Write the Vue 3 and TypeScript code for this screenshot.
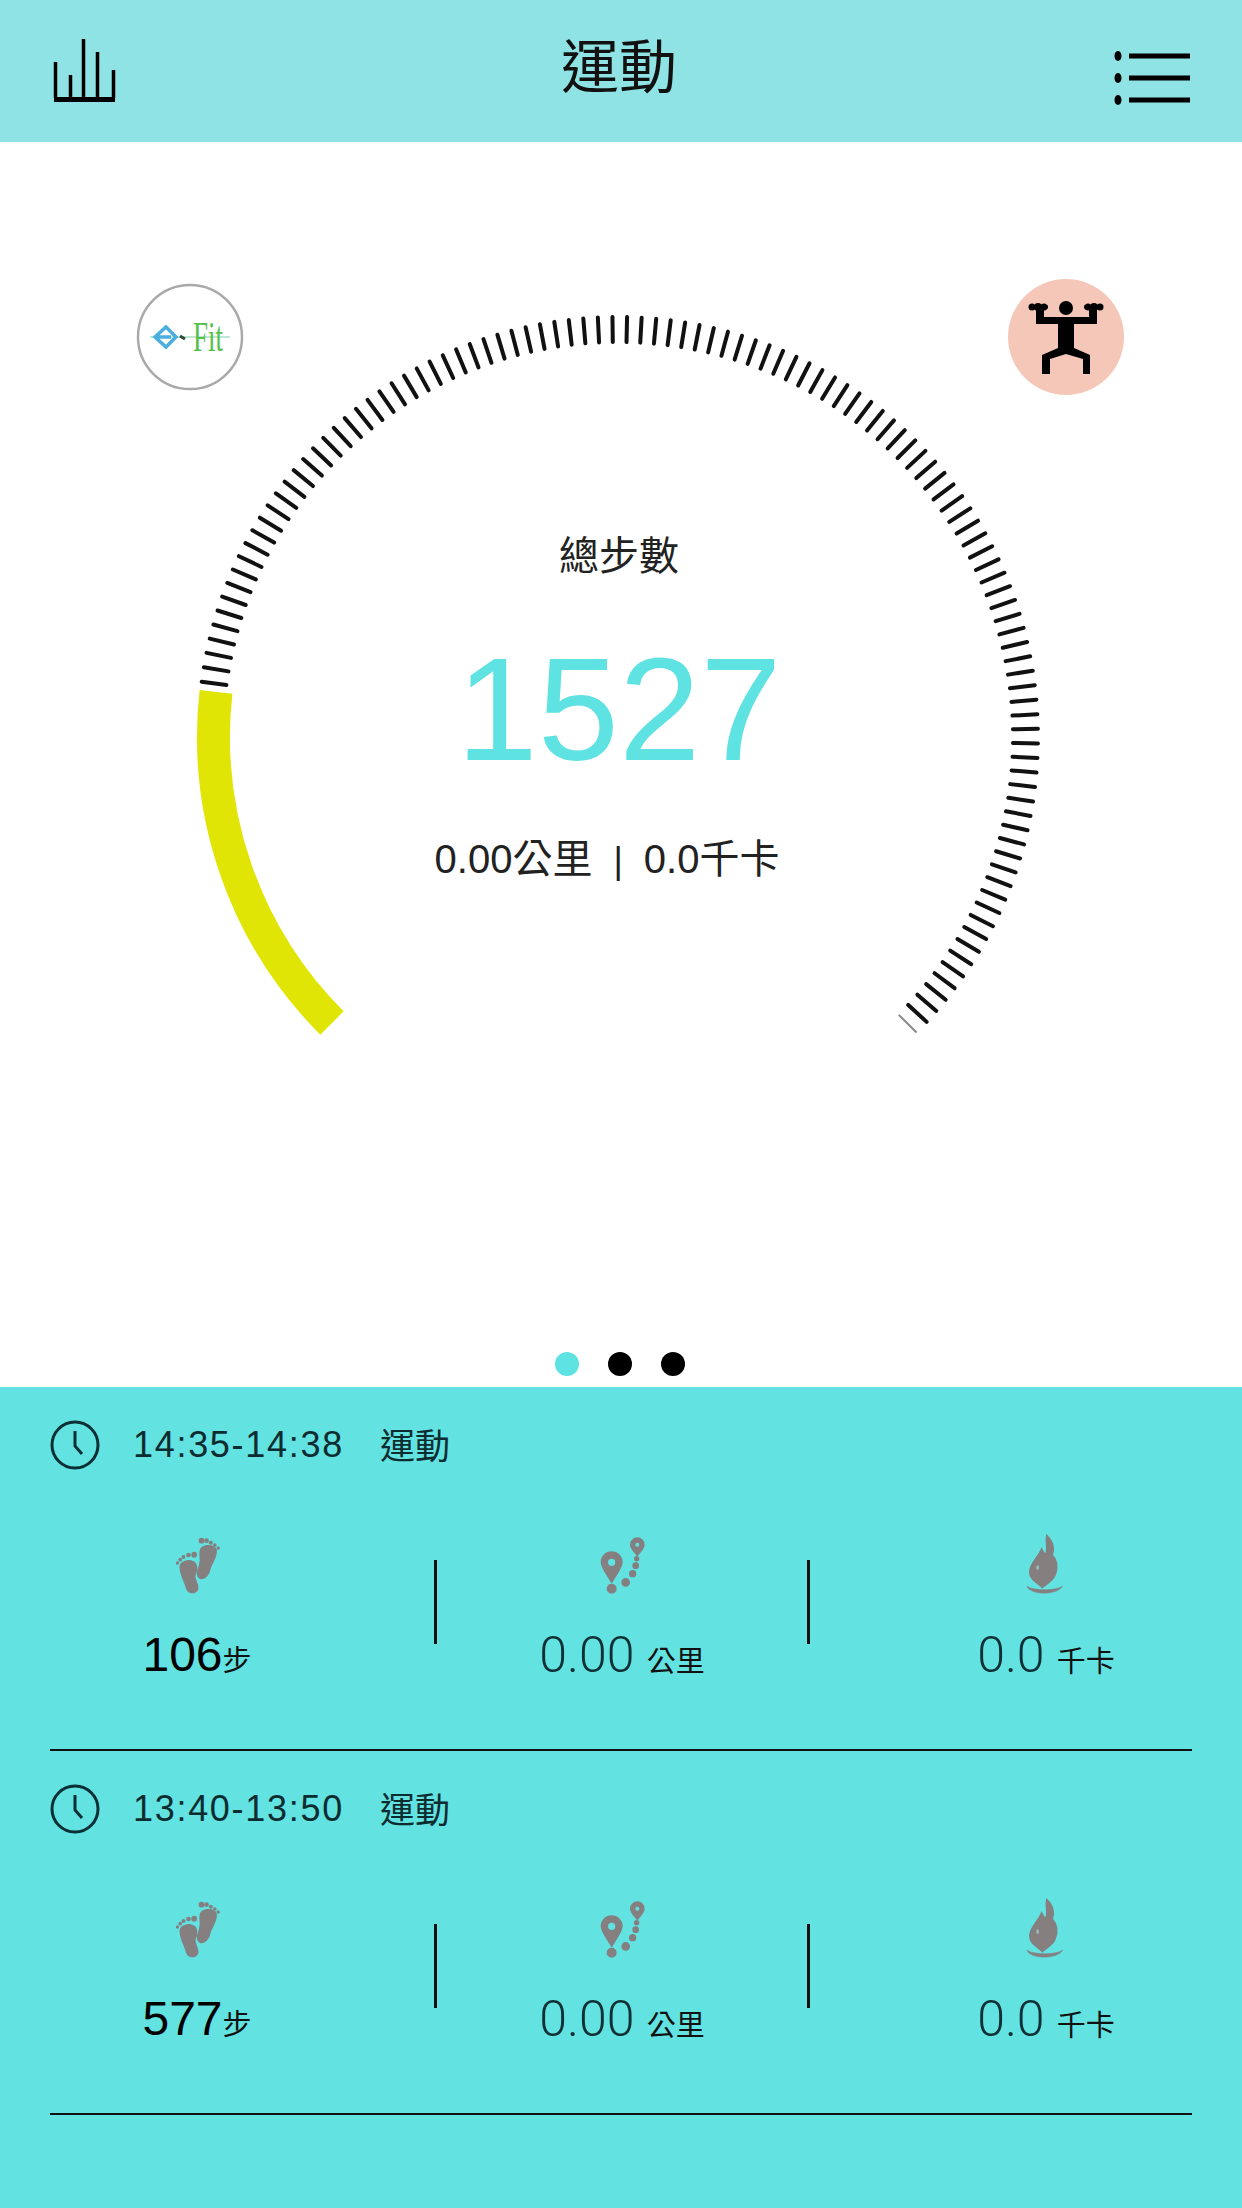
<template>
  <div class="page">
    <header class="top-bar">
      <svg class="bar-icon" viewBox="0 0 76 76">
        <path d="M3.500 29v36M18.500 42v23M31.500 6v59M45.500 19v46M61.500 37v28" stroke="#000" stroke-width="3.500" fill="none" />
        <rect x="2" y="64" width="61" height="5" fill="#000" />
      </svg>
      <h1 class="title">運動</h1>
      <svg class="bar-icon" viewBox="0 0 76 76">
        <g fill="#000">
          <ellipse cx="4" cy="23" rx="3.500" ry="5" />
          <ellipse cx="4" cy="45" rx="3.500" ry="5" />
          <ellipse cx="4" cy="67" rx="3.500" ry="5" />
          <rect x="15" y="20.500" width="61" height="5" />
          <rect x="15" y="42.500" width="61" height="5" />
          <rect x="15" y="64.500" width="61" height="5" />
        </g>
      </svg>
    </header>

    <main class="gauge-area">
      <svg class="gauge" viewBox="0 0 1242 1245">
        <line
          v-for="(t, i) in ticks"
          :key="i"
          :x1="t.x1"
          :y1="t.y1"
          :x2="t.x2"
          :y2="t.y2"
          :class="i === 0 ? 'tick-first' : 'tick'"
        />
        <path :d="progressArc" class="progress" />
      </svg>

      <svg class="logo" viewBox="0 0 140 140">
        <circle cx="70" cy="77" r="52" fill="#fff" stroke="#a9a9a9" stroke-width="2.500" />
        <path d="M30 77h80" stroke="#a8e0c4" stroke-width="1.500" />
        <path d="M46 67l10 10-10 10-11-10zM36 77h15" fill="none" stroke="#4aaede" stroke-width="3.500" />
        <path d="M60 76l5 3" stroke="#2c4a3c" stroke-width="3" />
        <text x="73" y="91" textLength="30" lengthAdjust="spacingAndGlyphs" class="logo-text">Fit</text>
      </svg>

      <svg class="badge" viewBox="0 0 150 150">
        <circle cx="76" cy="77" r="58" fill="#f5c7b9" />
        <circle cx="76" cy="48" r="7" fill="#000" />
        <path d="M46 50h8v7h14.500h15H99v-7h8v14H84v24l16 7v19h-7V99l-17-5-16 5v15h-8V95l16-7V64H46Z" fill="#000" />
        <path d="M40 47h18M94 47h18" stroke="#000" stroke-width="3" />
        <g fill="#000">
          <circle cx="42" cy="47" r="3.500" />
          <circle cx="48" cy="47" r="4" />
          <circle cx="54" cy="47" r="3.500" />
          <circle cx="98" cy="47" r="3.500" />
          <circle cx="104" cy="47" r="4" />
          <circle cx="110" cy="47" r="3.500" />
        </g>
      </svg>

      <div class="summary">
        <div class="summary-label">總步數</div>
        <div class="summary-value">1527</div>
        <div class="summary-sub">0.00公里<span class="sep">|</span>0.0千卡</div>
      </div>

      <div class="dots">
        <span class="dot active"></span>
        <span class="dot"></span>
        <span class="dot"></span>
      </div>
    </main>

    <section class="records">
      <div v-for="r in records" :key="r.time" class="record">
        <div class="record-head">
          <svg class="clock" viewBox="0 0 50 50">
            <circle cx="25" cy="25" r="23" fill="none" stroke="#0a3036" stroke-width="3" />
            <path d="M25 11v15l7 8" fill="none" stroke="#0a3036" stroke-width="3" />
          </svg>
          <span class="time">{{ r.time }}</span>
          <span class="kind">運動</span>
        </div>
        <div class="metrics">
          <div class="metric steps">
            <svg class="metric-icon foot" viewBox="40 70 140 192">
              <g fill="#857f80" stroke="#857f80" stroke-width="4">
                <path d="M58 172C58 155 85 148 100 158 112 168 108 185 102 198 100 212 115 225 110 240 100 255 82 250 77 235 72 215 58 195 58 172Z" />
                <path d="M118 125C120 105 155 102 165 118 172 135 155 155 148 175 145 195 132 210 118 206 106 200 110 182 116 168 122 150 116 140 118 125Z" />
                <circle cx="50" cy="160" r="3" />
                <circle cx="58" cy="150" r="3.500" />
                <circle cx="68" cy="142" r="4" />
                <circle cx="83" cy="136" r="5" />
                <circle cx="100" cy="135" r="6.500" />
                <circle cx="122" cy="93" r="6.500" />
                <circle cx="137" cy="93" r="5" />
                <circle cx="150" cy="99" r="4" />
                <circle cx="162" cy="106" r="3.500" />
                <circle cx="172" cy="115" r="3" />
              </g>
            </svg>
            <div class="value strong">{{ r.steps }}<span class="unit-step">步</span></div>
          </div>
          <div class="divider"></div>
          <div class="metric">
            <svg class="metric-icon pin" viewBox="55 40 141 192">
              <g fill="#857f80" stroke="#857f80" stroke-width="4">
                <path fill-rule="evenodd" d="M93 97a31 31 0 0 1 31 31c0 16-18 38-31 60-13-22-31-44-31-60a31 31 0 0 1 31-31Zm0 18a13 13 0 1 0 0 26 13 13 0 0 0 0-26Z" />
                <path fill-rule="evenodd" d="M170 55a20 20 0 0 1 20 20c0 11-12 22-20 33-8-11-20-22-20-33a20 20 0 0 1 20-20Zm0 12a8 8 0 1 0 0 16 8 8 0 0 0 0-16Z" />
                <circle cx="93" cy="207" r="13" />
                <circle cx="135" cy="188" r="11" />
                <circle cx="156" cy="162" r="9" />
                <circle cx="165" cy="138" r="8" />
                <circle cx="168" cy="117" r="6" />
              </g>
            </svg>
            <div class="value">0.00 <span class="unit">公里</span></div>
          </div>
          <div class="divider"></div>
          <div class="metric fire">
            <svg class="metric-icon flame" viewBox="56 48 150 192">
              <path fill="#857f80" stroke="#857f80" stroke-width="4" d="M133 55C150 70 158 90 150 115 165 130 168 155 158 175 150 195 132 200 120 212 108 198 82 190 82 165 82 140 105 125 118 95 122 105 126 110 130 112 138 95 128 75 133 55Z" />
              <ellipse cx="106" cy="152" rx="4" ry="7" fill="#9dbcbc" />
              <path d="M74 208C85 235 165 235 180 208 165 222 90 222 74 208Z" fill="#857f80" stroke="#857f80" stroke-width="2" />
            </svg>
            <div class="value">0.0 <span class="unit">千卡</span></div>
          </div>
        </div>
      </div>
    </section>
  </div>
</template>

<script setup lang="ts">
// 仪表盘圆心与半径
const cx = 618
const cy = 737
const outer = 420
const inner = 395

const rad = (deg: number) => (deg * Math.PI) / 180

// 刻度：从右下开始逆时针，每 2° 一格，到黄色进度条上方为止
const ticks = Array.from({ length: 110 }, (_, i) => {
  const a = rad(44.7 - i * 1.992)
  return {
    x1: cx + outer * Math.cos(a),
    y1: cy + outer * Math.sin(a),
    x2: cx + inner * Math.cos(a),
    y2: cy + inner * Math.sin(a),
  }
})

const mid = 404.5
const from = rad(135)
const to = rad(186.4)
const progressArc = `M${cx + mid * Math.cos(from)} ${cy + mid * Math.sin(from)} A${mid} ${mid} 0 0 1 ${cx + mid * Math.cos(to)} ${cy + mid * Math.sin(to)}`

const records = [
  { time: '14:35-14:38', steps: 106 },
  { time: '13:40-13:50', steps: 577 },
]
</script>

<style scoped>
.page {
  width: 1242px;
  height: 2208px;
  display: flex;
  flex-direction: column;
  overflow: hidden;
  background: #fff;
  color: #111;
  font-family: "Liberation Sans", "Noto Sans CJK TC", sans-serif;
}

.top-bar {
  height: 142px;
  flex: none;
  box-sizing: border-box;
  padding: 0 52px;
  display: flex;
  align-items: center;
  justify-content: space-between;
  background: #8fe3e4;
}

.bar-icon {
  width: 76px;
  height: 76px;
}

.title {
  margin: 0 4px 6px 0;
  font-size: 58px;
  line-height: 72px;
  font-weight: 400;
}

.gauge-area {
  position: relative;
  flex: none;
  height: 1245px;
  display: flex;
  flex-direction: column;
  align-items: center;
  box-sizing: border-box;
}

.gauge {
  position: absolute;
  left: 0;
  top: -142px;
  width: 1242px;
  height: 1245px;
}

.tick {
  stroke: #111;
  stroke-width: 4;
  stroke-linecap: round;
}

.tick-first {
  stroke: #888;
  stroke-width: 2;
}

.progress {
  fill: none;
  stroke: #e1e506;
  stroke-width: 33;
}

.logo {
  position: absolute;
  left: 120px;
  top: 118px;
  width: 140px;
  height: 140px;
}

.logo-text {
  font-family: "Liberation Serif", serif;
  font-size: 42px;
  fill: #55c04a;
}

.badge {
  position: absolute;
  left: 990px;
  top: 118px;
  width: 150px;
  height: 150px;
}

.summary {
  position: relative;
  margin-top: 386px;
  padding-right: 4px;
  display: flex;
  flex-direction: column;
  align-items: center;
}

.summary-label {
  font-size: 40px;
  line-height: 56px;
  color: #222;
}

.summary-value {
  margin-top: 41px;
  font-size: 146px;
  line-height: 170px;
  color: #5fe2e2;
}

.summary-sub {
  margin-top: 38px;
  margin-right: 24px;
  font-size: 40px;
  line-height: 52px;
  color: #222;
}

.sep {
  margin: 0 21px;
  font-size: 36px;
}

.dots {
  position: absolute;
  left: 0;
  right: 0;
  top: 1210px;
  display: flex;
  justify-content: center;
  gap: 29px;
  padding-right: 2px;
}

.dot {
  width: 24px;
  height: 24px;
  border-radius: 50%;
  background: #000;
}

.dot.active {
  background: #5fe2e2;
}

.records {
  flex: 1;
  background: #62e2e0;
}

.record {
  height: 364px;
  box-sizing: border-box;
  margin: 0 50px;
  border-bottom: 2px solid #111;
}

.record-head {
  height: 116px;
  display: flex;
  align-items: center;
}

.clock {
  width: 50px;
  height: 50px;
  flex: none;
}

.time {
  margin-left: 33px;
  font-size: 36px;
  letter-spacing: 1.700px;
  color: #0d2c30;
}

.kind {
  margin-left: 36px;
  margin-bottom: 4px;
  font-size: 35px;
  color: #0d2c30;
}

.metrics {
  display: flex;
  align-items: flex-start;
}

.metric {
  flex: 1;
  padding-top: 30px;
  display: flex;
  flex-direction: column;
  align-items: center;
}

.metric.steps {
  flex: 0 0 384px;
  box-sizing: border-box;
  padding-right: 90px;
}

.metric.fire {
  flex: 0 0 382px;
  box-sizing: border-box;
  padding-left: 90px;
}

.metric-icon {
  height: 64px;
  display: block;
}

.metric-icon.foot {
  width: 47px;
}

.metric-icon.pin {
  width: 47px;
}

.metric-icon.flame {
  width: 50px;
}

.divider {
  flex: none;
  width: 3px;
  height: 84px;
  margin-top: 57px;
  background: #111;
}

.value {
  margin-top: 30px;
  font-family: Roboto, "Liberation Sans", "Noto Sans CJK TC", sans-serif;
  font-size: 50px;
  line-height: 56px;
  font-weight: 300;
  white-space: nowrap;
  color: #0f3034;
}

.value.strong {
  font-family: "Liberation Sans", "Noto Sans CJK TC", sans-serif;
  font-size: 48px;
  font-weight: 400;
  color: #000;
}

.unit {
  font-family: "Noto Sans CJK TC", sans-serif;
  font-size: 29px;
  font-weight: 400;
  color: #111;
}

.unit-step {
  font-family: "Noto Sans CJK TC", sans-serif;
  font-size: 29px;
  color: #111;
}
</style>
